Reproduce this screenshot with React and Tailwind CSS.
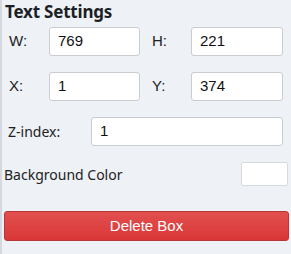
import React from "react";

function Field({ label, value, labelW, inputW }) {
  return (
    <div className="flex items-center">
      <span className={`${labelW} text-[15px] text-[#222]`} style={{ fontFamily: "'Liberation Sans', Arial, sans-serif" }}>
        {label}
      </span>
      <div
        className={`${inputW} flex h-[29px] items-center rounded-[3px] border border-[#c9ccd1] bg-white pl-[8px] text-[15px] text-[#111]`}
        style={{ fontFamily: "'Liberation Sans', Arial, sans-serif" }}
      >
        {value}
      </div>
    </div>
  );
}

export default function App() {
  return (
    <div className="h-[254px] w-[291px] overflow-hidden border-l-2 border-[#d5d9df] bg-[#eef1f6] font-['Noto_Sans',sans-serif]">
      <h2 className="pl-[3px] pt-[1px] text-[17px] font-bold leading-[22px] tracking-[-0.2px] text-[#1c1f24]">
        Text Settings
      </h2>

      <div className="mt-[4px] flex pl-[7px]">
        <Field label="W:" value="769" labelW="w-[40px]" inputW="w-[91px]" />
        <div className="w-[12px]" />
        <Field label="H:" value="221" labelW="w-[39px]" inputW="w-[92px]" />
      </div>

      <div className="mt-[16px] flex pl-[7px]">
        <Field label="X:" value="1" labelW="w-[40px]" inputW="w-[91px]" />
        <div className="w-[12px]" />
        <Field label="Y:" value="374" labelW="w-[39px]" inputW="w-[92px]" />
      </div>

      <div className="mt-[16px] flex items-center pl-[6px]">
        <span className="w-[83px] text-[14px] text-[#222]">Z-index:</span>
        <div
          className="flex h-[29px] w-[192px] items-center rounded-[3px] border border-[#c9ccd1] bg-white pl-[8px] text-[15px] text-[#111]"
          style={{ fontFamily: "'Liberation Sans', Arial, sans-serif" }}
        >
          1
        </div>
      </div>

      <div className="mt-[16px] flex items-center justify-between pl-[2px] pr-[3px]">
        <span className="text-[14px] text-[#222]">Background Color</span>
        <div className="h-[24px] w-[47px] rounded-[2px] border border-[#d6d9de] bg-white" />
      </div>

      <div className="mt-[25px] px-[2px]">
        <button
          className="flex h-[30px] w-full items-center justify-center rounded-[3px] border border-[#b73636] bg-gradient-to-b from-[#e24f4f] to-[#d93636] text-[15px] text-white"
          style={{ fontFamily: "'Liberation Sans', Arial, sans-serif" }}
        >
          Delete Box
        </button>
      </div>
    </div>
  );
}
